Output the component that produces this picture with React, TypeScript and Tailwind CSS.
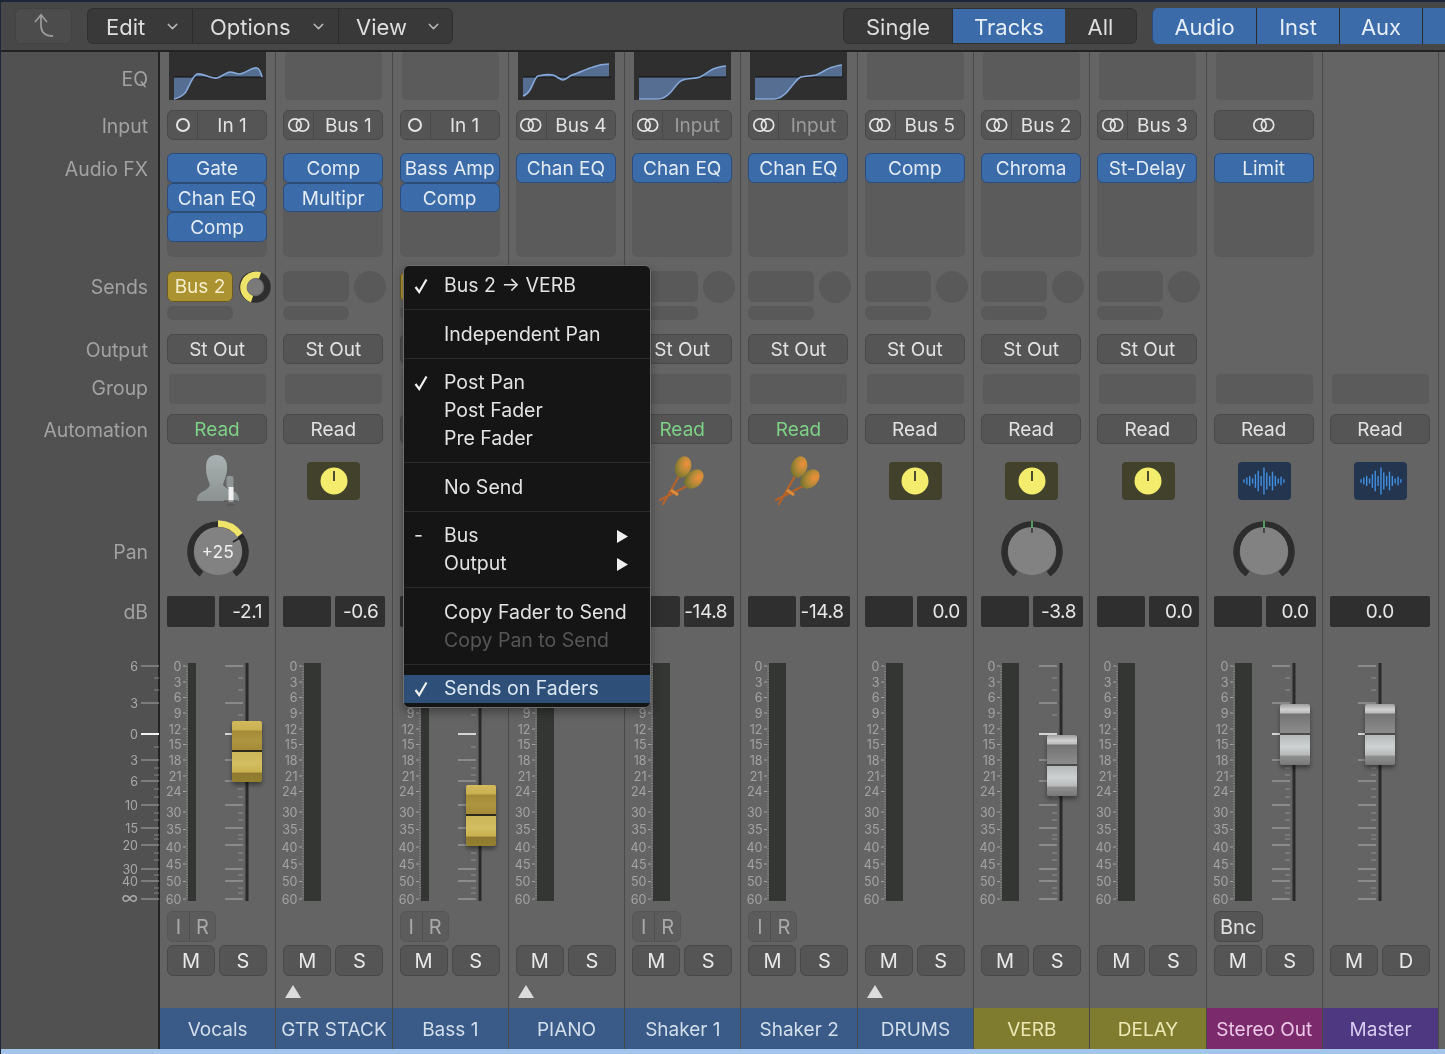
import React from "react";
import { ChevronDown } from "lucide-react";

const meterLabels: [string, number][] = [["0",3],["3",19],["6",34.5],["9",50],["12",66],["15",81.5],["18",97],["21",113],["24",128.5],["30",149],["35",166.5],["40",184],["45",201],["50",218.5],["60",236]];
const faderMajor = [3,40,97,118,142,165,182,206,218,236];
const faderMinor = [15,27,52,84,105,112,126,134,150,157,172,176,190,197,212,225,230];

type Fader = { cap: string; left: string; gold: boolean; shift: number };
type Strip = {
  name: string; nameBg: string; nameText: string; eq?: string; input?: string; stereo?: boolean; dimInput?: boolean;
  fx: string[]; hasFxBg: boolean; send?: "gold" | "empty"; output: boolean; green: boolean;
  icon: "mic" | "tuner" | "maraca" | "wave"; pan?: string; db: string; full?: boolean;
  meter: "narrow" | "wide" | "none"; fader?: Fader; rec?: "ir" | "bnc"; tri?: boolean; second?: string;
};

const BLUE = "bg-[#3a5a87]"; const BT = "text-[#d3deec]";
const OL = "bg-[#7f7c30]"; const OT = "text-[#ebe8b4]";

const strips: Strip[] = [
  { name:"Vocals", nameBg:BLUE, nameText:BT, eq:"a", input:"In 1", fx:["Gate","Chan EQ","Comp"], hasFxBg:true, send:"gold", output:true, green:true, icon:"mic", pan:"+25", db:"-2.1", meter:"narrow", fader:{cap:"top-[58px]",left:"left-[72px]",gold:true,shift:0}, rec:"ir" },
  { name:"GTR STACK", nameBg:BLUE, nameText:BT, input:"Bus 1", stereo:true, fx:["Comp","Multipr"], hasFxBg:true, send:"empty", output:true, green:false, icon:"tuner", db:"-0.6", meter:"wide", tri:true },
  { name:"Bass 1", nameBg:BLUE, nameText:BT, input:"In 1", fx:["Bass Amp","Comp"], hasFxBg:true, send:"gold", output:true, green:true, icon:"tuner", db:"-8.0", meter:"narrow", fader:{cap:"top-[122px]",left:"left-[73px]",gold:true,shift:0}, rec:"ir" },
  { name:"PIANO", nameBg:BLUE, nameText:BT, eq:"b", input:"Bus 4", stereo:true, fx:["Chan EQ"], hasFxBg:true, send:"empty", output:true, green:false, icon:"tuner", db:"0.0", meter:"wide", tri:true },
  { name:"Shaker 1", nameBg:BLUE, nameText:BT, eq:"c", input:"Input", stereo:true, dimInput:true, fx:["Chan EQ"], hasFxBg:true, send:"empty", output:true, green:true, icon:"maraca", db:"-14.8", meter:"wide", rec:"ir" },
  { name:"Shaker 2", nameBg:BLUE, nameText:BT, eq:"d", input:"Input", stereo:true, dimInput:true, fx:["Chan EQ"], hasFxBg:true, send:"empty", output:true, green:true, icon:"maraca", db:"-14.8", meter:"wide", rec:"ir" },
  { name:"DRUMS", nameBg:BLUE, nameText:BT, input:"Bus 5", stereo:true, fx:["Comp"], hasFxBg:true, send:"empty", output:true, green:false, icon:"tuner", db:"0.0", meter:"wide", tri:true },
  { name:"VERB", nameBg:OL, nameText:OT, input:"Bus 2", stereo:true, fx:["Chroma"], hasFxBg:true, send:"empty", output:true, green:false, icon:"tuner", pan:"", db:"-3.8", meter:"wide", fader:{cap:"top-[72px]",left:"left-[73px]",gold:false,shift:0} },
  { name:"DELAY", nameBg:OL, nameText:OT, input:"Bus 3", stereo:true, fx:["St-Delay"], hasFxBg:true, send:"empty", output:true, green:false, icon:"tuner", db:"0.0", meter:"wide" },
  { name:"Stereo Out", nameBg:"bg-[#7b2a6c]", nameText:"text-[#ecc8e6]", input:"", stereo:true, fx:["Limit"], hasFxBg:true, output:false, green:false, icon:"wave", pan:"", db:"0.0", meter:"wide", fader:{cap:"top-[41px]",left:"left-[73px]",gold:false,shift:0}, rec:"bnc" },
  { name:"Master", nameBg:"bg-[#4f3882]", nameText:"text-[#d6cdf0]", fx:[], hasFxBg:false, output:false, green:false, icon:"wave", db:"0.0", full:true, meter:"none", fader:{cap:"top-[41px]",left:"left-[42px]",gold:false,shift:-30}, second:"D" },
];

const btn = "flex items-center justify-center rounded-md border border-[#494949] bg-[#555555]";
const empty = "rounded-sm bg-[#5b5b5b]";

function Rings() {
  return (
    <svg width="24" height="16" viewBox="0 0 24 16" fill="none" stroke="#e4e4e4" strokeWidth="1.7">
      <circle cx="8" cy="8" r="6.2" />
      <circle cx="15.5" cy="8" r="6.2" />
    </svg>
  );
}

function EqCurve({ kind }: { kind: string }) {
  const curves: Record<string, string> = {
    a: "M5 47 C10 46 13 44 16 41 C20 36 23 24 28 22 C34 21 42 27 48 26 C53 25 57 20 61 20 C65 20 67 22 71 22 C77 21 83 15 88 16 C91 17 92 21 93 25",
    b: "M5 44 C8 43 10 41 12 38 C15 33 17 25 20 24 C25 23 31 22 35 23 C39 24 42 28 45 28 C48 28 51 24 54 23 C61 21 68 17 75 15 C80 13 86 12 91 12",
    c: "M5 47 L24 47 C29 47 33 44 36 41 C41 36 44 29 49 28 C54 26 61 27 66 25 C72 22 77 17 82 16 C85 15 89 14 92 14",
    d: "M5 47 L24 47 C29 47 33 44 36 41 C41 36 46 27 51 25 C56 24 61 24 66 23 C72 21 77 16 83 15 C86 14 89 13 92 13",
  };
  const d = curves[kind];
  const endX = kind === "a" ? 93 : kind === "b" ? 91 : 92;
  return (
    <svg width="97" height="48" viewBox="0 0 97 48" className="block">
      <rect width="97" height="48" fill="#2f2f2f" />
      <path d={`${d} L${endX} 25 L5 25 Z`} fill="#566e91" />
      <line x1="5" y1="25" x2="93" y2="25" stroke="#111" strokeWidth="1.2" />
      <path d={d} fill="none" stroke="#86a9da" strokeWidth="1.6" />
    </svg>
  );
}

function SendKnob({ on }: { on: boolean }) {
  if (!on) return <div className="w-8 h-8 rounded-full bg-[#595959] shrink-0" />;
  return (
    <svg width="34" height="34" viewBox="0 0 34 34" className="shrink-0">
      <circle cx="17" cy="17" r="12.5" fill="none" stroke="#2e2e2e" strokeWidth="6.5" />
      <path d="M22 5.5 A12.5 12.5 0 1 0 14 29.2" fill="none" stroke="#efe36a" strokeWidth="6.5" />
      <circle cx="17" cy="17" r="8" fill="#7a7a7a" />
    </svg>
  );
}

function MicIcon() {
  return (
    <svg width="54" height="54" viewBox="0 0 54 54" className="overflow-visible">
      <defs>
        <linearGradient id="mp" x1="0" y1="0" x2="0" y2="1">
          <stop offset="0" stopColor="#a9b2b2" />
          <stop offset="1" stopColor="#8c9292" />
        </linearGradient>
      </defs>
      <path d="M25 1 C33 1 37 7 36 16 C35 23 33 27 32 31 C34 34 40 36 44 38 C47 40 48 43 48 47 L6 47 C6 43 7 40 11 38 C15 36 18 34 19 31 C17 26 15 21 15 14 C15 6 18 1 25 1 Z" fill="url(#mp)" />
      <rect x="35.5" y="22" width="7" height="12" rx="2" fill="#8f9595" />
      <rect x="37.5" y="33" width="5" height="15" fill="#f0f0f0" />
      <path d="M33 47 L47 47 M36 51 L44 51" stroke="#4e5151" strokeWidth="1" />
    </svg>
  );
}

function MaracaIcon() {
  return (
    <svg width="50" height="54" viewBox="0 0 50 54" className="overflow-visible">
      <defs>
        <radialGradient id="mh" cx="0.65" cy="0.3" r="0.85">
          <stop offset="0" stopColor="#f0903a" />
          <stop offset="0.45" stopColor="#b58a38" />
          <stop offset="1" stopColor="#5f6c2c" />
        </radialGradient>
      </defs>
      <path d="M21 22 L5 50 M33 30 L2 46" stroke="#b5622a" strokeWidth="2.2" fill="none" strokeLinecap="round" />
      <ellipse cx="25" cy="13" rx="8" ry="11" transform="rotate(20 25 13)" fill="url(#mh)" />
      <ellipse cx="36" cy="25" rx="8" ry="11" transform="rotate(45 36 25)" fill="url(#mh)" />
      <path d="M13 36 L20 41" stroke="#d98b3a" strokeWidth="3" />
    </svg>
  );
}

function TunerIcon() {
  return (
    <div className="w-[53px] h-[38px] rounded-sm bg-[#41412c] flex items-center justify-center">
      <svg width="28" height="28" viewBox="0 0 28 28">
        <circle cx="14" cy="14" r="13.5" fill="#f4ec6c" />
        <line x1="14" y1="4" x2="14" y2="14" stroke="#222" strokeWidth="1.6" />
      </svg>
    </div>
  );
}

function WaveIcon() {
  const bars = [2,4,6,3,8,12,6,16,10,6,11,6,3,5,2];
  return (
    <div className="w-[53px] h-[38px] rounded-sm bg-[#24364f] flex items-center justify-center">
      <svg width="42" height="30" viewBox="0 0 42 30">
        {bars.map((h, i) => (
          <line key={i} x1={1 + i * 2.85} x2={1 + i * 2.85} y1={15 - h * 0.85} y2={15 + h * 0.85} stroke="#408fe0" strokeWidth="1.4" />
        ))}
      </svg>
    </div>
  );
}

function PanKnob({ value }: { value: string }) {
  const yellow = value !== "";
  return (
    <div className="relative w-[62px] h-[62px]">
      <svg width="62" height="62" viewBox="0 0 62 62">
        <path d="M14.5 54 A27.5 27.5 0 1 1 47.5 54" fill="none" stroke="#2d2d2d" strokeWidth="6.5" />
        <circle cx="31" cy="31" r="24" fill="#828282" />
        {yellow && <path d="M31 3.5 A27.5 27.5 0 0 1 53 15" fill="none" stroke="#efe36a" strokeWidth="6.5" />}
        {yellow && <line x1="46" y1="22" x2="56" y2="16" stroke="#222" strokeWidth="1.5" />}
        {!yellow && <line x1="31" y1="1" x2="31" y2="8" stroke="#62b36e" strokeWidth="1.6" />}
        {!yellow && <line x1="31" y1="8" x2="31" y2="13" stroke="#2d2d2d" strokeWidth="1.4" />}
      </svg>
      {yellow && <span className="absolute inset-0 flex items-center justify-center pt-[2px] text-[17.5px] text-[#eeeeee]">{value}</span>}
    </div>
  );
}

function Cap({ f }: { f: Fader }) {
  const look = f.gold
    ? "bg-[linear-gradient(to_bottom,#d2ba5e_0%,#c9b050_14%,#a58b38_17%,#ae9540_32%,#a58b38_47%,#2d2a18_48%,#2d2a18_50%,#cdb65a_51%,#d3bd62_70%,#c9b24f_83%,#8f7a30_86%,#93802f_100%)]"
    : "bg-[linear-gradient(to_bottom,#9c9c9c_0%,#d0d0d0_9%,#bdbdbd_14%,#747474_17%,#8c8c8c_47%,#4a4a4a_48%,#4a4a4a_50%,#b6b9b9_51%,#ced1d1_70%,#b8baba_83%,#8f8f8f_86%,#787878_100%)]";
  return <div className={`absolute ${f.cap} ${f.left} w-[30px] h-[61px] rounded-[2px] shadow-[0_3px_4px_rgba(0,0,0,0.4)] ${look}`} />;
}

function FaderArea({ s }: { s: Strip }) {
  const sh = s.fader ? s.fader.shift : 0;
  return (
    <div className="relative h-[238px]">
      <svg width="116" height="238" viewBox="0 0 116 238" className="block overflow-visible">
        {s.meter !== "none" && (
          <g>
            {meterLabels.map(([t, y]) => (
              <g key={t}>
                <text x="21.5" y={y + 4.5} textAnchor="end" fontSize="12.5" fill="#a3a3a3" fontFamily="Inter, sans-serif">{t}</text>
                <line x1="23" x2="26" y1={y} y2={y} stroke="#a3a3a3" strokeWidth="1" />
              </g>
            ))}
            <line x1="27" x2="27" y1="3" y2="236" stroke="#a3a3a3" strokeWidth="1" strokeDasharray="1 1.6" />
            <rect x="28" y="0" width={s.meter === "narrow" ? 8 : 17} height="238" fill="#333632" />
          </g>
        )}
        {s.fader && (
          <g transform={`translate(${sh} 0)`}>
            <rect x="85.5" y="0" width="3" height="238" fill="#2a2a2a" />
            {faderMajor.map((y) => <line key={y} x1="65" x2="83" y1={y} y2={y} stroke="#a3a3a3" strokeWidth="1.2" />)}
            {faderMinor.map((y) => <line key={y} x1="78" x2="83" y1={y} y2={y} stroke="#8e8e8e" strokeWidth="1" />)}
            <line x1="65" x2="83" y1="71" y2="71" stroke="#f2f2f2" strokeWidth="1.6" />
          </g>
        )}
      </svg>
      {s.fader && <Cap f={s.fader} />}
    </div>
  );
}

function StripColumn({ s }: { s: Strip }) {
  const second = s.second ?? "S";
  return (
    <div className="w-[116.3px] shrink-0 flex flex-col border-r border-[#494949] bg-[#646464]">
      <div className="h-[48px] pl-[9px]">
        {s.eq ? <EqCurve kind={s.eq} /> : s.name !== "Master" ? <div className={`w-[97px] h-[48px] ${empty}`} /> : null}
      </div>
      <div className="h-[30px] mt-[10px] pl-[7px]">
        {s.input !== undefined && (
          <div className="w-[100px] h-[30px] flex rounded-md border border-[#494949] bg-[#555555] text-[#e2e2e2]">
            {s.input === "" ? (
              <div className="flex-1 flex items-center justify-center"><Rings /></div>
            ) : (
              <>
                <div className="w-[30px] flex items-center justify-center border-r border-[#494949]">
                  {s.stereo ? <Rings /> : <div className="w-[14px] h-[14px] rounded-full border-2 border-[#e4e4e4]" />}
                </div>
                <div className={`flex-1 flex items-center justify-center pt-[3px] ${s.dimInput ? "text-[#9c9c9c]" : ""}`}>{s.input}</div>
              </>
            )}
          </div>
        )}
      </div>
      <div className="h-[104px] mt-[13px] pl-[7px]">
        {s.hasFxBg && (
          <div className="w-[100px] h-[104px] rounded-md bg-[#5b5b5b]">
            {s.fx.map((f) => (
              <div key={f} className="h-[29.6px] flex items-center justify-center pt-[3px] rounded-md border border-[#2c4d7a] bg-[#3b6ba8] text-[#e2ebf6] whitespace-nowrap">{f}</div>
            ))}
          </div>
        )}
      </div>
      <div className="h-[31px] mt-[14px] pl-[7px] flex items-center gap-[5px]">
        {s.send === "gold" && <div className="w-[66px] h-[31px] flex items-center justify-center pt-[2px] rounded-md border border-[#6b5a24] bg-[#ac9332] text-[#f5eecb]">Bus 2</div>}
        {s.send === "empty" && <div className="w-[66px] h-[31px] rounded-md bg-[#595959]" />}
        {s.send && <SendKnob on={s.send === "gold"} />}
      </div>
      <div className="h-[14px] mt-[4px] pl-[7px]">
        {s.send && <div className="w-[66px] h-[14px] rounded-md bg-[#595959]" />}
      </div>
      <div className="h-[30px] mt-[14px] pl-[7px]">
        {s.output && <div className={`w-[100px] h-[30px] pt-[3px] text-[#e2e2e2] ${btn}`}>St Out</div>}
      </div>
      <div className="h-[30px] mt-[10px] pl-[9px]"><div className={`w-[97px] h-[30px] ${empty}`} /></div>
      <div className="h-[30px] mt-[10px] pl-[7px]">
        <div className={`w-[100px] h-[30px] pt-[3px] ${btn} ${s.green ? "text-[#7ed186]" : "text-[#e2e2e2]"}`}>Read</div>
      </div>
      <div className="h-[38px] mt-[18px] flex items-center justify-center">
        {s.icon === "mic" && <MicIcon />}
        {s.icon === "tuner" && <TunerIcon />}
        {s.icon === "maraca" && <MaracaIcon />}
        {s.icon === "wave" && <WaveIcon />}
      </div>
      <div className="h-[58px] mt-[22px] flex items-center justify-center">
        {s.pan !== undefined && <PanKnob value={s.pan} />}
      </div>
      <div className="h-[31px] mt-[16px] pl-[7px] flex gap-[4px] text-[#e6e6e6]">
        {s.full ? (
          <div className="w-[100px] rounded-[2px] bg-[#2f2f2f] flex items-center justify-center pt-[2px]">{s.db}</div>
        ) : (
          <>
            <div className="w-[48px] rounded-[2px] bg-[#2f2f2f]" />
            <div className="w-[50px] rounded-[2px] bg-[#2f2f2f] flex items-center justify-end pt-[2px] pr-[7px] tracking-[-0.4px]">{s.db}</div>
          </>
        )}
      </div>
      <div className="mt-[36px]"><FaderArea s={s} /></div>
      <div className="h-[31px] mt-[10px] pl-[7px]">
        {s.rec === "ir" && (
          <div className="w-[49px] h-[31px] flex rounded-md border border-[#565656] bg-[#5c5c5c] text-[#a9a9a9] text-[20px]">
            <div className="w-[22px] flex items-center justify-center border-r border-[#4e4e4e]">I</div>
            <div className="flex-1 flex items-center justify-center">R</div>
          </div>
        )}
        {s.rec === "bnc" && <div className={`w-[49px] h-[31px] text-[#e2e2e2] ${btn} text-[20px]`}>Bnc</div>}
      </div>
      <div className="h-[31px] mt-[3px] pl-[7px] flex gap-[4px]">
        <div className={`w-[48px] h-[31px] text-[#e8e8e8] ${btn} text-[20px]`}>M</div>
        <div className={`w-[48px] h-[31px] text-[#e8e8e8] ${btn} text-[20px]`}>{second}</div>
      </div>
      <div className="h-[13px] mt-[9px] pl-[9px]">
        {s.tri && (
          <svg width="16" height="13" viewBox="0 0 16 13" className="block"><path d="M8 0 L16 13 L0 13 Z" fill="#dcdcdc" /></svg>
        )}
      </div>
      <div className={`h-[41px] mt-[10px] flex items-center justify-center pt-[3px] whitespace-nowrap ${s.nameBg} ${s.nameText}`}>{s.name}</div>
    </div>
  );
}

function SideScale() {
  const rows: [string, number][] = [["6",3],["3",40],["0",71],["3",97],["6",118],["10",142],["15",165],["20",182],["30",206],["40",218],["∞",236]];
  const minor = [15,27,84,105,112,126,134,150,157,172,176,190,197,212,225,230];
  return (
    <svg width="158" height="238" viewBox="0 0 158 238" className="block overflow-visible">
      {rows.map(([t, y], i) => (
        <g key={i}>
          <text x="137" y={y + 4.5} textAnchor="end" fontSize={t === "∞" ? 18 : 12.5} fill="#a8a8a8" fontFamily="Inter, DejaVu Sans, sans-serif">{t}</text>
          <line x1="140" x2="158" y1={y} y2={y} stroke={y === 71 ? "#f2f2f2" : "#9a9a9a"} strokeWidth={y === 71 ? 2 : 1.2} />
        </g>
      ))}
      {minor.map((y) => <line key={y} x1="153" x2="158" y1={y} y2={y} stroke="#858585" strokeWidth="1" />)}
    </svg>
  );
}

function Label({ slot, text, align = "items-center" }: { slot: string; text: string; align?: string }) {
  return <div className={`${slot} flex ${align} justify-end pr-[10px] text-[19.4px] text-[#a2a2a2]`}>{text}</div>;
}

function Sidebar() {
  return (
    <div className="w-[159px] shrink-0 flex flex-col border-r-2 border-[#232323] bg-[#515151]">
      <Label slot="h-[48px] pt-[7px]" text="EQ" />
      <Label slot="h-[30px] mt-[10px] pt-[3px]" text="Input" />
      <Label slot="h-[104px] mt-[13px] pt-[2px]" text="Audio FX" align="items-start" />
      <Label slot="h-[31px] mt-[14px] pt-[2px]" text="Sends" />
      <div className="h-[14px] mt-[4px]" />
      <Label slot="h-[30px] mt-[14px] pt-[3px]" text="Output" />
      <Label slot="h-[30px] mt-[10px]" text="Group" />
      <Label slot="h-[30px] mt-[10px] pt-[3px]" text="Automation" />
      <div className="h-[38px] mt-[18px]" />
      <Label slot="h-[58px] mt-[22px] pt-[3px]" text="Pan" />
      <Label slot="h-[31px] mt-[16px] pt-[2px]" text="dB" />
      <div className="mt-[36px]"><SideScale /></div>
    </div>
  );
}

function Seg({ w, on, children, last }: { w: string; on?: boolean; children: React.ReactNode; last?: boolean }) {
  return (
    <div className={`${w} flex items-center justify-center pt-[2px] ${on ? "bg-[#3b6ba8] text-[#e6eef8]" : "text-[#dedede]"} ${last ? "" : "border-r border-[#2c2c2c]"}`}>{children}</div>
  );
}

function TopBar() {
  return (
    <div className="h-[52px] shrink-0 flex items-center border-b-2 border-[#222222] border-t-2 border-t-[#1d2638] bg-[#474747] text-[22px] pl-[14px]">
      <div className="w-[57px] h-[36px] rounded-md bg-[#4c4c4c] border border-[#434343] flex items-center justify-center">
        <svg width="24" height="26" viewBox="0 0 24 26" fill="none" stroke="#9a9a9a" strokeWidth="1.8">
          <path d="M3 9 L9 2 L15 9" />
          <path d="M9 2 L9 12 C9 19 13 23 21 23" />
        </svg>
      </div>
      <div className="ml-[15px] h-[36px] w-[366px] flex rounded-md bg-[#393939] border border-[#303030] overflow-hidden">
        <div className="w-[105px] flex items-center justify-between pl-[18px] pr-[11px] border-r border-[#2c2c2c] text-[#dedede]"><span className="pt-[2px]">Edit</span><ChevronDown size={17} className="text-[#b5b5b5]" /></div>
        <div className="w-[146px] flex items-center justify-between pl-[17px] pr-[11px] border-r border-[#2c2c2c] text-[#dedede]"><span className="pt-[2px]">Options</span><ChevronDown size={17} className="text-[#b5b5b5]" /></div>
        <div className="flex-1 flex items-center justify-between pl-[17px] pr-[10px] text-[#dedede]"><span className="pt-[2px]">View</span><ChevronDown size={17} className="text-[#b5b5b5]" /></div>
      </div>
      <div className="ml-[390px] h-[36px] w-[294px] flex rounded-md bg-[#393939] border border-[#303030] overflow-hidden">
        <Seg w="w-[109px]">Single</Seg>
        <Seg w="w-[112px]" on last>Tracks</Seg>
        <Seg w="flex-1" last>All</Seg>
      </div>
      <div className="ml-[15px] h-[36px] flex rounded-l-md overflow-hidden bg-[#3b6ba8] border-l border-[#2c4d7a] flex-1">
        <Seg w="w-[104px]" on>Audio</Seg>
        <Seg w="w-[83px]" on>Inst</Seg>
        <Seg w="w-[83px]" on>Aux</Seg>
        <Seg w="flex-1" on last>{""}</Seg>
      </div>
    </div>
  );
}

function Check() {
  return (
    <svg width="14" height="16" viewBox="0 0 14 16" fill="none" stroke="#f0f0f0" strokeWidth="2.2" className="block">
      <path d="M1.5 9 L5.2 14 L12.5 1.5" />
    </svg>
  );
}

function MenuRow({ label, check, arrow, dim, hl }: { label: string; check?: string; arrow?: boolean; dim?: boolean; hl?: boolean }) {
  return (
    <div className={`h-[28px] flex items-center relative pl-[40px] pr-[22px] ${dim ? "text-[#565656]" : hl ? "bg-[#2e4f78] text-[#dbe6f3]" : "text-[#e2e2e2]"}`}>
      {check && <span className="absolute left-[10px]">{check === "✓" ? <Check /> : "-"}</span>}
      <span className="flex-1">{label}</span>
      {arrow && <svg width="11" height="13" viewBox="0 0 11 13"><path d="M0 0 L11 6.5 L0 13 Z" fill="#f0f0f0" /></svg>}
    </div>
  );
}

function Sep() {
  return <div className="h-px bg-[#2b2b2b] mt-[9px] mb-[10.5px]" />;
}

function Menu() {
  return (
    <div className="absolute left-[402px] top-[265px] w-[248px] h-[443px] rounded-md border border-[#6e6e6e] bg-[#151515] text-[19.5px] pt-[6px] shadow-[0_4px_10px_rgba(0,0,0,0.35)] overflow-hidden">
      <MenuRow label="Bus 2 → VERB" check="✓" />
      <Sep />
      <MenuRow label="Independent Pan" />
      <Sep />
      <MenuRow label="Post Pan" check="✓" />
      <MenuRow label="Post Fader" />
      <MenuRow label="Pre Fader" />
      <Sep />
      <MenuRow label="No Send" />
      <Sep />
      <MenuRow label="Bus" check="-" arrow />
      <MenuRow label="Output" arrow />
      <Sep />
      <MenuRow label="Copy Fader to Send" />
      <MenuRow label="Copy Pan to Send" dim />
      <Sep />
      <MenuRow label="Sends on Faders" check="✓" hl />
    </div>
  );
}

export default function App() {
  return (
    <div className="relative w-[1445px] h-[1054px] overflow-hidden flex flex-col bg-[#646464] text-[19px] font-['Inter',sans-serif] border-l border-[#1d2638] blur-[0.4px]">
      <TopBar />
      <div className="flex flex-1 overflow-hidden">
        <Sidebar />
        <div className="flex flex-1">
          {strips.map((s) => <StripColumn key={s.name} s={s} />)}
          <div className="flex-1 bg-[#646464]" />
        </div>
      </div>
      <div className="h-[5px] shrink-0 bg-[#a3c5ec]" />
      <Menu />
    </div>
  );
}
